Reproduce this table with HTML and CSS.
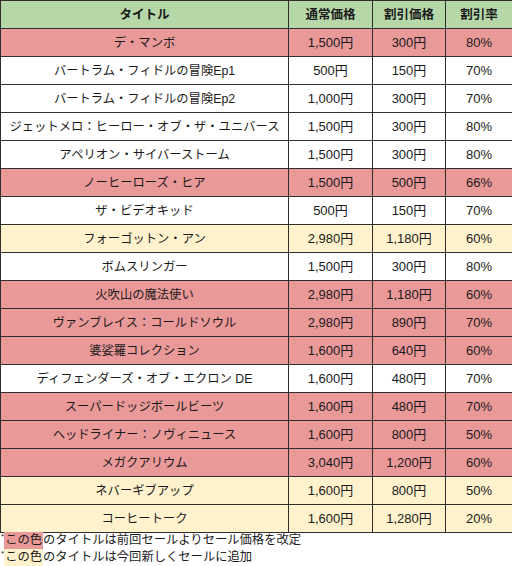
FILE: index.html
```html
<!DOCTYPE html>
<html lang="ja">
<head>
<meta charset="utf-8">
<link rel="stylesheet" href="styles.css">
</head>
<body>
<table class="sale">
  <colgroup>
    <col class="c-title"><col class="c-price"><col class="c-sale"><col class="c-rate">
  </colgroup>
  <thead>
    <tr class="head"><th>タイトル</th><th>通常価格</th><th>割引価格</th><th>割引率</th></tr>
  </thead>
  <tbody>
    <tr class="pink"><td>デ・マンボ</td><td>1,500円</td><td>300円</td><td>80%</td></tr>
    <tr><td>バートラム・フィドルの冒険Ep1</td><td>500円</td><td>150円</td><td>70%</td></tr>
    <tr><td>バートラム・フィドルの冒険Ep2</td><td>1,000円</td><td>300円</td><td>70%</td></tr>
    <tr><td>ジェットメロ：ヒーロー・オブ・ザ・ユニバース</td><td>1,500円</td><td>300円</td><td>80%</td></tr>
    <tr><td>アペリオン・サイバーストーム</td><td>1,500円</td><td>300円</td><td>80%</td></tr>
    <tr class="pink"><td>ノーヒーローズ・ヒア</td><td>1,500円</td><td>500円</td><td>66%</td></tr>
    <tr><td>ザ・ビデオキッド</td><td>500円</td><td>150円</td><td>70%</td></tr>
    <tr class="yellow"><td>フォーゴットン・アン</td><td>2,980円</td><td>1,180円</td><td>60%</td></tr>
    <tr><td>ボムスリンガー</td><td>1,500円</td><td>300円</td><td>80%</td></tr>
    <tr class="pink"><td>火吹山の魔法使い</td><td>2,980円</td><td>1,180円</td><td>60%</td></tr>
    <tr class="pink"><td>ヴァンブレイス：コールドソウル</td><td>2,980円</td><td>890円</td><td>70%</td></tr>
    <tr class="pink"><td>婆娑羅コレクション</td><td>1,600円</td><td>640円</td><td>60%</td></tr>
    <tr><td>ディフェンダーズ・オブ・エクロン DE</td><td>1,600円</td><td>480円</td><td>70%</td></tr>
    <tr class="pink"><td>スーパードッジボールビーツ</td><td>1,600円</td><td>480円</td><td>70%</td></tr>
    <tr class="pink"><td>ヘッドライナー：ノヴィニュース</td><td>1,600円</td><td>800円</td><td>50%</td></tr>
    <tr class="pink"><td>メガクアリウム</td><td>3,040円</td><td>1,200円</td><td>60%</td></tr>
    <tr class="yellow"><td>ネバーギブアップ</td><td>1,600円</td><td>800円</td><td>50%</td></tr>
    <tr class="yellow"><td>コーヒートーク</td><td>1,600円</td><td>1,280円</td><td>20%</td></tr>
  </tbody>
</table>
<p class="note"><span class="ast">*</span><span class="mark mark-pink">この色</span>のタイトルは前回セールよりセール価格を改定</p>
<p class="note"><span class="ast">*</span><span class="mark mark-yellow">この色</span>のタイトルは今回新しくセールに追加</p>
</body>
</html>
```
FILE: styles.css
```css
html, body {
  margin: 0;
  padding: 0;
  background: #ffffff;
}
body {
  font-family: "Liberation Sans", "Noto Sans CJK JP", sans-serif;
  font-size: 13px;
  color: #1a1a1a;
  width: 512px;
}
.sale {
  border-collapse: collapse;
  table-layout: fixed;
  width: 512px;
}
.c-title { width: 288px; }
.c-price { width: 84px; }
.c-sale { width: 73px; }
.c-rate { width: 67px; }
.sale th, .sale td {
  border: 1px solid #2e2e2e;
  height: 27px;
  padding: 0;
  text-align: center;
  vertical-align: middle;
  white-space: nowrap;
  line-height: 16px;
}
.sale td:first-child {
  font-size: 12.3px;
}
.head th {
  background: #b6d7a8;
  font-weight: bold;
  font-size: 12.5px;
}
.pink td { background: #ea9999; }
.yellow td { background: #fff2cc; }
.note {
  margin: 0;
  height: 17px;
  line-height: 17px;
  font-size: 12.3px;
  white-space: nowrap;
}
.note:first-of-type {
  margin-top: -1px;
}
.ast {
  font-size: 8px;
  vertical-align: top;
  line-height: 10px;
  padding-left: 1px;
}
.mark {
  display: inline-block;
  padding: 0 1px;
}
.mark-pink { background: #ea9999; }
.mark-yellow { background: #fff2cc; }
```
